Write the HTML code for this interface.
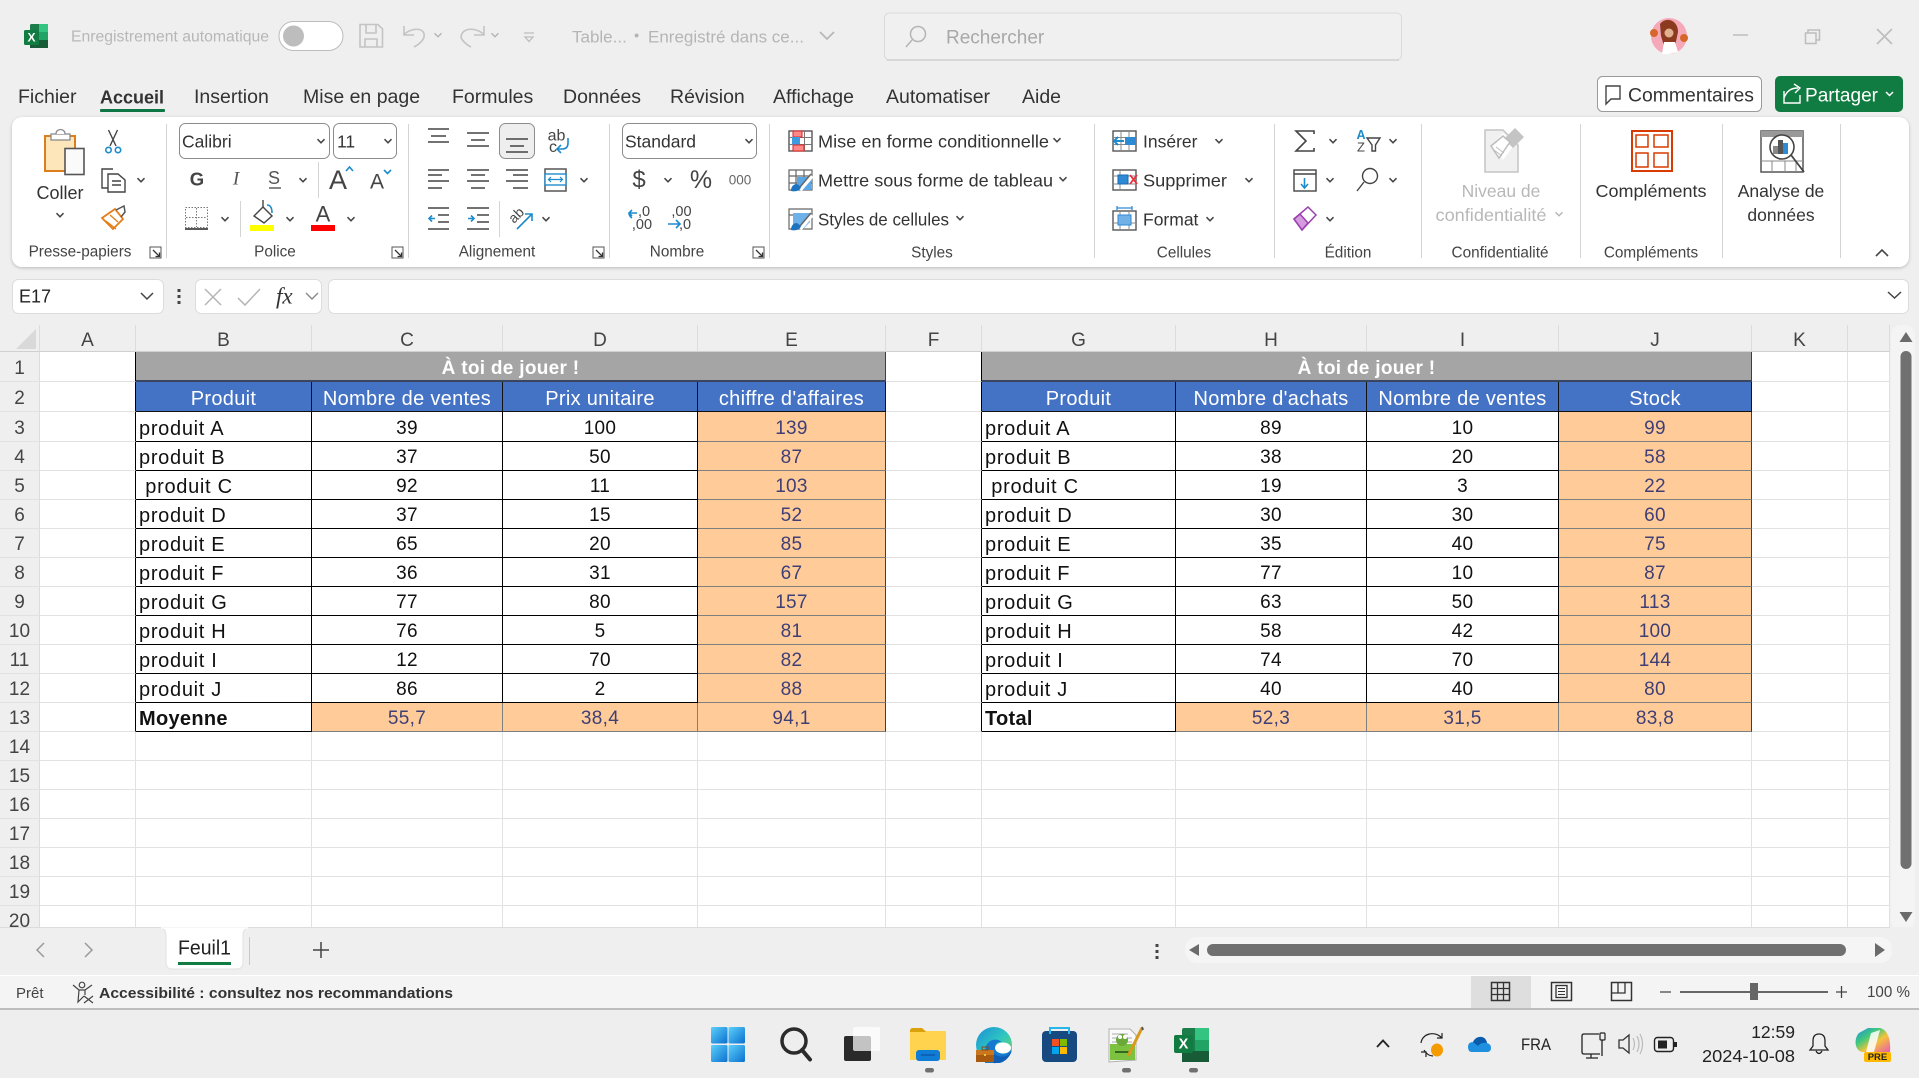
<!DOCTYPE html>
<html lang="fr"><head><meta charset="utf-8"><title>Excel</title>
<style>
html,body{margin:0;padding:0;width:1919px;height:1078px;overflow:hidden;background:#efefef;font-family:"Liberation Sans",sans-serif}
#g{position:absolute;left:0;top:325px;width:1890px;height:602px;overflow:hidden;background:#fff}
table{table-layout:fixed;border-collapse:separate;border-spacing:0;width:1890px;font-size:19px;letter-spacing:.3px;color:#111}
td,th{padding:3px 0 0;height:29px;box-sizing:border-box;text-align:center;vertical-align:middle;line-height:1;font-weight:400;white-space:pre;overflow:hidden;border-right:1px solid #e2e2e2;border-bottom:1px solid #e2e2e2}
th{background:#efefef;color:#444;border-right:1px solid #dcdcdc;border-bottom:1px solid #e2e2e2;letter-spacing:0}
tr.h th{height:27px;padding-top:4px;border-bottom:1px solid #d0d0d0}
tr.t td,tr.t th,tr.u td,tr.u th,tr.v td,tr.v th{height:30px;padding-top:4px}
.k{border-right:1px solid #000;border-bottom:1px solid #000}
.l{text-align:left;padding-left:3px;font-size:20px;letter-spacing:.7px}
.r{border-right:1px solid #000}
.o{background:#fc9;color:#3f3f76;border-right:1px solid #7f7f7f;border-bottom:1px solid #7f7f7f}
.oe{border-right:1px solid #3f3f3f}
.b{background:#4472c4;color:#fff;border-right:1px solid #111;border-bottom:1px solid #111;font-size:20px}
.y{background:#a5a5a5;color:#fff;font-weight:700;border-right:1px solid #3f3f3f;border-bottom:2px solid #3a4660}
.m{font-weight:700;letter-spacing:.3px}
svg{position:absolute;left:0;top:0}
text{font-family:"Liberation Sans",sans-serif;fill:#333;dominant-baseline:central}
.f{fill:none;stroke:#444;stroke-width:1.4}
.bl{fill:none;stroke:#1e8bcd;stroke-width:1.6}
.lb{font-size:15.3px;fill:#444;text-anchor:middle}
.tx{font-size:17.5px;fill:#333}
.mn{font-size:19.5px;fill:#333}
</style></head><body>
<div id="g"><table>
<colgroup><col style="width:40px"><col style="width:96px"><col style="width:176px"><col style="width:191px"><col style="width:195px"><col style="width:188px"><col style="width:96px"><col style="width:194px"><col style="width:191px"><col style="width:192px"><col style="width:193px"><col style="width:96px"><col style="width:42px"></colgroup>
<tr class="h"><th></th><th>A</th><th>B</th><th>C</th><th>D</th><th>E</th><th>F</th><th>G</th><th>H</th><th>I</th><th>J</th><th>K</th><th></th></tr>
<tr class="t"><th>1</th><td class="r"></td><td class="y" colspan="4">À toi de jouer !</td><td class="r"></td><td class="y" colspan="4">À toi de jouer !</td><td></td><td></td></tr>
<tr class="u"><th>2</th><td class="r"></td><td class="b">Produit</td><td class="b">Nombre de ventes</td><td class="b">Prix unitaire</td><td class="b">chiffre d'affaires</td><td class="r"></td><td class="b">Produit</td><td class="b">Nombre d'achats</td><td class="b">Nombre de ventes</td><td class="b">Stock</td><td></td><td></td></tr>
<tr class="v"><th>3</th><td class="r"></td><td class="k l">produit A</td><td class="k">39</td><td class="k">100</td><td class="o oe">139</td><td class="r"></td><td class="k l">produit A</td><td class="k">89</td><td class="k">10</td><td class="o oe">99</td><td></td><td></td></tr>
<tr><th>4</th><td class="r"></td><td class="k l">produit B</td><td class="k">37</td><td class="k">50</td><td class="o oe">87</td><td class="r"></td><td class="k l">produit B</td><td class="k">38</td><td class="k">20</td><td class="o oe">58</td><td></td><td></td></tr>
<tr><th>5</th><td class="r"></td><td class="k l"> produit C</td><td class="k">92</td><td class="k">11</td><td class="o oe">103</td><td class="r"></td><td class="k l"> produit C</td><td class="k">19</td><td class="k">3</td><td class="o oe">22</td><td></td><td></td></tr>
<tr><th>6</th><td class="r"></td><td class="k l">produit D</td><td class="k">37</td><td class="k">15</td><td class="o oe">52</td><td class="r"></td><td class="k l">produit D</td><td class="k">30</td><td class="k">30</td><td class="o oe">60</td><td></td><td></td></tr>
<tr><th>7</th><td class="r"></td><td class="k l">produit E</td><td class="k">65</td><td class="k">20</td><td class="o oe">85</td><td class="r"></td><td class="k l">produit E</td><td class="k">35</td><td class="k">40</td><td class="o oe">75</td><td></td><td></td></tr>
<tr><th>8</th><td class="r"></td><td class="k l">produit F</td><td class="k">36</td><td class="k">31</td><td class="o oe">67</td><td class="r"></td><td class="k l">produit F</td><td class="k">77</td><td class="k">10</td><td class="o oe">87</td><td></td><td></td></tr>
<tr><th>9</th><td class="r"></td><td class="k l">produit G</td><td class="k">77</td><td class="k">80</td><td class="o oe">157</td><td class="r"></td><td class="k l">produit G</td><td class="k">63</td><td class="k">50</td><td class="o oe">113</td><td></td><td></td></tr>
<tr><th>10</th><td class="r"></td><td class="k l">produit H</td><td class="k">76</td><td class="k">5</td><td class="o oe">81</td><td class="r"></td><td class="k l">produit H</td><td class="k">58</td><td class="k">42</td><td class="o oe">100</td><td></td><td></td></tr>
<tr><th>11</th><td class="r"></td><td class="k l">produit I</td><td class="k">12</td><td class="k">70</td><td class="o oe">82</td><td class="r"></td><td class="k l">produit I</td><td class="k">74</td><td class="k">70</td><td class="o oe">144</td><td></td><td></td></tr>
<tr><th>12</th><td class="r"></td><td class="k l">produit J</td><td class="k">86</td><td class="k">2</td><td class="o oe">88</td><td class="r"></td><td class="k l">produit J</td><td class="k">40</td><td class="k">40</td><td class="o oe">80</td><td></td><td></td></tr>
<tr><th>13</th><td class="r"></td><td class="k l m">Moyenne</td><td class="o">55,7</td><td class="o">38,4</td><td class="o oe">94,1</td><td class="r"></td><td class="k l m">Total</td><td class="o">52,3</td><td class="o">31,5</td><td class="o oe">83,8</td><td></td><td></td></tr>
<tr><th>14</th><td></td><td></td><td></td><td></td><td></td><td></td><td></td><td></td><td></td><td></td><td></td><td></td></tr>
<tr><th>15</th><td></td><td></td><td></td><td></td><td></td><td></td><td></td><td></td><td></td><td></td><td></td><td></td></tr>
<tr><th>16</th><td></td><td></td><td></td><td></td><td></td><td></td><td></td><td></td><td></td><td></td><td></td><td></td></tr>
<tr><th>17</th><td></td><td></td><td></td><td></td><td></td><td></td><td></td><td></td><td></td><td></td><td></td><td></td></tr>
<tr><th>18</th><td></td><td></td><td></td><td></td><td></td><td></td><td></td><td></td><td></td><td></td><td></td><td></td></tr>
<tr><th>19</th><td></td><td></td><td></td><td></td><td></td><td></td><td></td><td></td><td></td><td></td><td></td><td></td></tr>
<tr><th>20</th><td></td><td></td><td></td><td></td><td></td><td></td><td></td><td></td><td></td><td></td><td></td><td></td></tr>
</table></div>

<svg width="1919" height="1078" viewBox="0 0 1919 1078" xmlns="http://www.w3.org/2000/svg">
<defs>
<path id="ch" d="M-3.5-1.8 0 1.8 3.5-1.8" fill="none" stroke="#444" stroke-width="1.5"/>
<path id="chg" d="M-3.5-1.8 0 1.8 3.5-1.8" fill="none" stroke="#b5b5b5" stroke-width="1.4"/>
<g id="lc"><rect x="0" y="0" width="11" height="11" fill="none" stroke="#555" stroke-width="1"/><path d="M3 3 9.5 9.5M9.5 5.5V9.5H5.5" fill="none" stroke="#333" stroke-width="1.3"/></g>
<linearGradient id="win" x1="0" y1="0" x2="1" y2="1"><stop offset="0" stop-color="#5cd0fb"/><stop offset="1" stop-color="#0b70cf"/></linearGradient>
<linearGradient id="edge" x1="0" y1="0" x2="1" y2="1"><stop offset="0" stop-color="#1a8fd8"/><stop offset=".5" stop-color="#2fc6c0"/><stop offset="1" stop-color="#7fd84f"/></linearGradient>
<linearGradient id="cop" x1="0" y1="0" x2="1" y2="1"><stop offset="0" stop-color="#1a8fe0"/><stop offset=".35" stop-color="#42c97a"/><stop offset=".6" stop-color="#f5c33b"/><stop offset="1" stop-color="#e85ab0"/></linearGradient>
</defs>

<!-- Title bar -->
<rect x="30" y="24" width="18" height="24" rx="1.5" fill="#1b7d49"/><rect x="39" y="24" width="9" height="8" fill="#33c481"/><rect x="39" y="32" width="9" height="8" fill="#21a366"/><rect x="30" y="40" width="18" height="8" fill="#185c37"/>
<rect x="24" y="30" width="15" height="15" rx="1.5" fill="#107c41"/><text x="31.5" y="37.5" text-anchor="middle" style="font-size:12px;font-weight:700;fill:#fff">X</text>
<text x="71" y="37" style="font-size:15.3px;fill:#b7b7b7" textLength="198" lengthAdjust="spacingAndGlyphs">Enregistrement automatique</text>
<rect x="279" y="21.5" width="64" height="29" rx="14.5" fill="#fff" stroke="#bcbcbc"/><circle cx="293.5" cy="36" r="10.5" fill="#bdbdbd"/>
<path d="M360 24.500H378L382.500 29V47H360ZM366 25V33H376V25M365 47V39H377V47" fill="none" stroke="#c4c4c4" stroke-width="1.6"/>
<path d="M404 26V35H414M404 35C409 28 426 26 424 37 423 41 418 45 414 47" fill="none" stroke="#c4c4c4" stroke-width="1.6"/>
<use href="#chg" x="438" y="35"/>
<path d="M484 26V35H474M484 35C479 28 462 26 461 37 462 41 467 45 471 47" fill="none" stroke="#c4c4c4" stroke-width="1.6"/>
<use href="#chg" x="495" y="35"/>
<path d="M524 33H534M525 37H533L529 41.500Z" fill="none" stroke="#bdbdbd" stroke-width="1.3"/>
<text x="572" y="37" style="font-size:17px;fill:#b5b5b5">Table...</text><text x="634" y="36" style="font-size:15px;fill:#b5b5b5">•</text><text x="648" y="37" style="font-size:17px;fill:#b5b5b5">Enregistré dans ce...</text>
<path d="M820 32 827 39 834 32" fill="none" stroke="#b5b5b5" stroke-width="1.6"/>
<rect x="884.500" y="13" width="517" height="47" rx="5" fill="#f0f0f0" stroke="#dadada"/><path d="M887 60H1399" stroke="#cfcfcf" stroke-width="1.500"/>
<circle cx="918" cy="34" r="7.500" fill="none" stroke="#b5b5b5" stroke-width="1.500"/><path d="M912 40 906 47" stroke="#b5b5b5" stroke-width="1.500"/>
<text x="946" y="38" style="font-size:19px;fill:#a8a8a8">Rechercher</text>
<circle cx="1669" cy="36" r="18" fill="#f5a9b8"/><path d="M1660 24C1666 16 1678 20 1678 32L1675 46 1664 46 1661 36Z" fill="#8b3a1f"/><path d="M1662 54 1664 42H1675L1678 52 1669 54Z" fill="#fff"/><circle cx="1669" cy="33" r="4.500" fill="#e2b08f"/><circle cx="1654" cy="33" r="4" fill="#d6662a"/><circle cx="1684" cy="38" r="4" fill="#d6662a"/>
<path d="M1733 35H1748" stroke="#bdbdbd" stroke-width="1.500"/>
<path d="M1805.500 33H1816V43.500H1805.500ZM1808 33V30H1819.500V40H1816" fill="none" stroke="#bdbdbd" stroke-width="1.500"/>
<path d="M1877 29 1892 44M1892 29 1877 44" stroke="#bdbdbd" stroke-width="1.600"/>

<!-- Menu -->
<text x="18" y="97" class="mn">Fichier</text>
<text x="100" y="97" class="mn" style="font-weight:700;font-size:18.5px" textLength="64" lengthAdjust="spacingAndGlyphs">Accueil</text>
<text x="194" y="97" class="mn">Insertion</text>
<text x="303" y="97" class="mn">Mise en page</text>
<text x="452" y="97" class="mn">Formules</text>
<text x="563" y="97" class="mn">Données</text>
<text x="670" y="97" class="mn">Révision</text>
<text x="773" y="97" class="mn">Affichage</text>
<text x="886" y="97" class="mn">Automatiser</text>
<text x="1022" y="97" class="mn">Aide</text>
<rect x="100" y="109" width="65" height="3" rx="1" fill="#0e7544"/>
<rect x="1597.500" y="76.500" width="164" height="35" rx="5" fill="#fff" stroke="#9a9a9a"/>
<path d="M1606 86H1620V99H1611L1606 104Z" fill="none" stroke="#444" stroke-width="1.400"/>
<text x="1628" y="96" style="font-size:19px;fill:#333" textLength="126" lengthAdjust="spacingAndGlyphs">Commentaires</text>
<rect x="1775" y="76" width="128" height="36" rx="5" fill="#107c41"/>
<path d="M1784 91V103H1800V95M1784 98C1787 90 1792 88 1798 88M1794 84 1800 88 1795 93" fill="none" stroke="#fff" stroke-width="1.400"/>
<text x="1805" y="96" style="font-size:19px;fill:#fff" textLength="73" lengthAdjust="spacingAndGlyphs">Partager</text>
<path d="M1886 92 1889.500 95.500 1893 92" fill="none" stroke="#fff" stroke-width="1.500"/>

<!-- Ribbon -->
<rect x="12" y="117" width="1897" height="150" rx="10" fill="#fff" style="filter:drop-shadow(0 1.500px 1.500px rgba(0,0,0,.22))"/>
<path d="M166.500 124V258M408.500 124V258M609.500 124V258M769.500 124V258M1094.500 124V258M1274.500 124V258M1421.500 124V258M1580.500 124V258M1722.500 124V258M1840.500 124V258" stroke="#d4d4d4"/>

<!-- clipboard -->
<rect x="45" y="136" width="30" height="35" fill="#fde6ba" stroke="#dc7d1e" stroke-width="2"/>
<rect x="51" y="134" width="19" height="6" fill="#fff" stroke="#8a8a8a" stroke-width="1.300"/><path d="M56 134C56 128 65 128 65 134" fill="#fff" stroke="#8a8a8a" stroke-width="1.300"/>
<rect x="65" y="148.500" width="19" height="26" fill="#fafafa" stroke="#555" stroke-width="1.600"/>
<text x="60" y="193" style="font-size:18px;text-anchor:middle">Coller</text>
<use href="#ch" x="60" y="215"/>
<path d="M117.500 130 110 146M108.500 130 116 146" class="f"/><circle cx="108.500" cy="150" r="2.700" class="bl"/><circle cx="118" cy="150" r="2.700" class="bl"/>
<path d="M113 169H102V188H108M108 174H118L125 180V192H108ZM112 181H121M112 185H121" class="f"/><use href="#ch" x="141" y="180"/>
<path d="M102 218 115 209 123 219 113 229Z" fill="#fff" stroke="#e67c18" stroke-width="1.800"/><path d="M106 221 116 229M110 215 118 222" stroke="#e67c18" stroke-width="1.300"/><path d="M116 210 124 206 125 212 121 217" fill="none" stroke="#555" stroke-width="1.500"/>
<text x="80" y="252" class="lb">Presse-papiers</text><use href="#lc" x="150" y="247"/>

<!-- font -->
<rect x="179.500" y="123.500" width="150" height="35" rx="6" fill="#fff" stroke="#8c8c8c"/>
<text x="182" y="141.500" class="tx" style="font-size:17.500px">Calibri</text><use href="#ch" x="321" y="141"/>
<rect x="333.500" y="123.500" width="63" height="35" rx="6" fill="#fff" stroke="#8c8c8c"/>
<text x="337" y="141.500" class="tx" style="font-size:17.500px">11</text><use href="#ch" x="388" y="141"/>
<text x="197" y="179" style="font-size:18.500px;font-weight:700;text-anchor:middle;fill:#444">G</text>
<text x="236" y="179" style="font-size:19px;font-style:italic;text-anchor:middle;font-family:'Liberation Serif',serif;fill:#555">I</text>
<text x="274" y="178" style="font-size:18px;text-anchor:middle;fill:#555">S</text><path d="M269 188H281" stroke="#555" stroke-width="1.400"/>
<use href="#ch" x="303" y="180"/><path d="M318.500 162V198" stroke="#d4d4d4"/>
<text x="338" y="180" style="font-size:27px;text-anchor:middle;fill:#444">A</text><path d="M346 171 349.500 167 353 171" class="bl"/>
<text x="377" y="182" style="font-size:21px;text-anchor:middle;fill:#444">A</text><path d="M384 170 387.500 173.500 391 170" class="bl"/>
<rect x="185.500" y="207.500" width="22" height="20" fill="none" stroke="#777" stroke-width="1" stroke-dasharray="1.500 1.500"/><path d="M196.500 208V227M186 217.500H207" stroke="#777" stroke-width="1" stroke-dasharray="1.500 1.500"/><path d="M185 229H208" stroke="#222" stroke-width="1.600"/>
<use href="#ch" x="225" y="219"/><path d="M240.500 201V237" stroke="#d4d4d4"/>
<path d="M254 216 263 207 272 216 264 223Z" fill="none" stroke="#444" stroke-width="1.400"/><path d="M263 207V200" stroke="#444" stroke-width="1.400"/><path d="M267 205C271 205 272 209 272 213" class="bl"/>
<rect x="250" y="225" width="24" height="6" fill="#ff0"/><use href="#ch" x="290" y="219"/>
<text x="323" y="214" style="font-size:22px;text-anchor:middle;fill:#444">A</text><rect x="311" y="225" width="24" height="6" fill="#f00"/><use href="#ch" x="351" y="219"/>
<text x="275" y="252" class="lb">Police</text><use href="#lc" x="392" y="247"/>

<!-- alignment -->
<path d="M428 129H449M431 136H446M428 142H449" class="f"/>
<path d="M467 133H489M471 140H485M467 146H489" class="f"/>
<rect x="499.500" y="123.500" width="35" height="35" rx="6" fill="#eee" stroke="#8c8c8c"/><path d="M506 139H528M510 146H524M506 152H528" class="f"/>
<text x="556.500" y="136" style="font-size:16px;text-anchor:middle;fill:#444">ab</text><text x="553" y="147.500" style="font-size:16px;text-anchor:middle;fill:#444">c</text><path d="M568 138V143Q568 149 562 149H557M561 145 557 149 561 153" class="bl"/>
<path d="M428 170H449M428 175H442M428 181H449M428 188H442" class="f"/>
<path d="M467 170H489M471 175H485M467 181H489M471 188H485" class="f"/>
<path d="M506 170H528M513 175H528M506 181H528M513 188H528" class="f"/>
<rect x="545" y="169" width="21" height="22" fill="none" stroke="#555" stroke-width="1.500"/><rect x="545" y="174" width="21" height="11" fill="#fff" stroke="#1e8bcd" stroke-width="1.400"/><path d="M549 179.500H562M551 177 548.500 179.500 551 182M560 177 562.500 179.500 560 182" class="bl" style="stroke-width:1.200"/>
<use href="#ch" x="584" y="180"/>
<path d="M428 208H449M438 215H449M438 222H449M428 229H449" class="f"/><path d="M435 218.500H429M432 215.500 429 218.500 432 221.500" class="bl"/>
<path d="M467 208H489M477 215H489M477 222H489M467 229H489" class="f"/><path d="M468 218.500H474M471 215.500 474 218.500 471 221.500" class="bl"/>
<path d="M499.500 201V237" stroke="#d4d4d4"/>
<text x="516" y="215" transform="rotate(-45 516 215)" style="font-size:14px;text-anchor:middle;fill:#444">ab</text><path d="M517 229 532 214M525 214H532V221" class="bl"/>
<use href="#ch" x="546" y="219"/>
<text x="497" y="252" class="lb">Alignement</text><use href="#lc" x="593" y="247"/>

<!-- number -->
<rect x="622.500" y="123.500" width="134" height="35" rx="6" fill="#fff" stroke="#8c8c8c"/>
<text x="625" y="141.500" class="tx" style="font-size:17.500px">Standard</text><use href="#ch" x="749" y="141"/>
<text x="639" y="180" style="font-size:24px;text-anchor:middle;fill:#444">$</text><use href="#ch" x="668" y="180"/>
<text x="701" y="180" style="font-size:25px;text-anchor:middle;fill:#444">%</text>
<text x="740" y="180" style="font-size:13.500px;text-anchor:middle;fill:#666">000</text>
<text x="644" y="212" style="font-size:14.500px;text-anchor:middle;fill:#444">,0</text><text x="642" y="225" style="font-size:14.500px;text-anchor:middle;fill:#444">,00</text><path d="M637 213H629M632 210 629 213 632 216M629 213Q629 216 632 218" class="bl"/>
<text x="681.500" y="212" style="font-size:14.500px;text-anchor:middle;fill:#444">,00</text><text x="685" y="225" style="font-size:14.500px;text-anchor:middle;fill:#444">,0</text><path d="M668 224H680M676 220 680 224 676 228" class="bl"/>
<text x="677" y="252" class="lb">Nombre</text><use href="#lc" x="753" y="247"/>

<!-- styles -->
<rect x="789" y="131" width="23" height="20" fill="#fff" stroke="#555" stroke-width="1.400"/><path d="M789 137.500H812M789 144.500H812M797 131V151M804.500 131V151" stroke="#777"/><rect x="793" y="131" width="9" height="6" fill="#f88" stroke="#d22"/><rect x="792" y="137" width="8" height="8" fill="#3d9be0"/><rect x="793" y="145" width="11" height="6" fill="#f88" stroke="#d22"/>
<text x="818" y="141.500" class="tx" textLength="231" lengthAdjust="spacingAndGlyphs">Mise en forme conditionnelle</text><use href="#ch" x="1057" y="140"/>
<path d="M789 170H812V190H789ZM789 176H812M796 170V190M804 170V190M789 183H812" fill="none" stroke="#666" stroke-width="1.200"/><path d="M797 177H811V190H797ZM797 177" fill="#5aa7e8"/><path d="M800 190 812 176" stroke="#fff" stroke-width="4"/><path d="M800 187 811 174" stroke="#666" stroke-width="1.500"/><path d="M791 191C791 186 794 184 797 184L801 187C800 191 795 192 791 191Z" fill="#1e73c0"/>
<text x="818" y="180.500" class="tx" textLength="235" lengthAdjust="spacingAndGlyphs">Mettre sous forme de tableau</text><use href="#ch" x="1063" y="179"/>
<path d="M789 209H812V229H789ZM789 215H812" fill="none" stroke="#666" stroke-width="1.200"/><path d="M793 213H810V222L803 229H793Z" fill="#6fb2ea"/><path d="M800 229 812 215" stroke="#fff" stroke-width="4"/><path d="M800 226 811 213" stroke="#666" stroke-width="1.500"/><path d="M791 230C791 225 794 223 797 223L801 226C800 230 795 231 791 230Z" fill="#1e73c0"/>
<text x="818" y="219.500" class="tx" textLength="131" lengthAdjust="spacingAndGlyphs">Styles de cellules</text><use href="#ch" x="960" y="218"/>
<text x="932" y="253" class="lb">Styles</text>

<!-- cells -->
<rect x="1113" y="131" width="23" height="20" fill="#fff" stroke="#555" stroke-width="1.400"/><path d="M1113 137.500H1136M1113 144.500H1136M1121 131V151M1129 131V151" stroke="#888"/><rect x="1125" y="137" width="11" height="8" fill="#2f8ad6"/><path d="M1124 141H1114M1118 137 1114 141 1118 145" class="bl" style="stroke-width:2"/>
<text x="1143" y="141.500" class="tx">Insérer</text><use href="#ch" x="1219" y="141"/>
<rect x="1113" y="170" width="23" height="20" fill="#fff" stroke="#555" stroke-width="1.400"/><path d="M1113 176H1136M1113 184H1136M1120 170V190" stroke="#888"/><rect x="1118" y="175" width="10" height="9" fill="#2f8ad6" stroke="#1a6bb3"/><path d="M1130 175 1137 184M1137 175 1130 184" stroke="#e8303a" stroke-width="1.800"/>
<text x="1143" y="180.500" class="tx" textLength="84" lengthAdjust="spacingAndGlyphs">Supprimer</text><use href="#ch" x="1249" y="180"/>
<rect x="1113" y="211" width="23" height="19" fill="#fff" stroke="#555" stroke-width="1.400"/><path d="M1113 223H1136M1120 211V230M1129 211V230" stroke="#888"/><rect x="1118" y="215" width="13" height="10" fill="#72b1e6" stroke="#2f8ad6"/><path d="M1117 208H1132M1117 206V210M1132 206V210" stroke="#2f8ad6" stroke-width="1.300"/>
<text x="1143" y="219.500" class="tx">Format</text><use href="#ch" x="1210" y="219"/>
<text x="1184" y="253" class="lb">Cellules</text>

<!-- editing -->
<path d="M1314 134V131H1296L1306 141 1296 151H1314V148" class="f" style="stroke-width:1.600"/><use href="#ch" x="1333" y="141"/>
<text x="1361" y="135" style="font-size:12.500px;font-weight:700;text-anchor:middle;fill:#1e8bcd">A</text><text x="1361" y="147" style="font-size:13px;text-anchor:middle;fill:#444">Z</text><path d="M1367 138H1380L1375.500 145V151H1372V145Z" class="f"/><use href="#ch" x="1393" y="141"/>
<rect x="1294" y="170" width="22" height="21" fill="none" stroke="#444" stroke-width="1.400"/><path d="M1294 174H1316" stroke="#444" stroke-width="1.400"/><path d="M1304.500 178V187M1301 184 1304.500 188 1308 184" class="bl"/><use href="#ch" x="1330" y="180"/>
<circle cx="1370" cy="176" r="7.500" class="f"/><path d="M1364 182 1357 191" class="f"/><use href="#ch" x="1393" y="180"/>
<path d="M1294 219 1308 207 1316 215 1302 230Z" fill="#fff" stroke="#9a40ad" stroke-width="1.500"/><path d="M1294 219 1300 214 1308 223 1302 230Z" fill="#d49bde" stroke="#9a40ad" stroke-width="1.500"/><use href="#ch" x="1330" y="219"/>
<text x="1348" y="253" class="lb">Édition</text>

<!-- sensitivity -->
<path d="M1485 130H1503L1518 145V172H1485Z" fill="#f0f0f0" stroke="#c4c4c4" stroke-width="1.500"/>
<path d="M1491 146 1503 133 1515 144 1503 160Z" fill="#fff"/><path d="M1504 139 1515 128 1524 137 1513 148Z" fill="#c4c4c4"/><path d="M1491 146 1503 136 1510 142 1499 158Z" fill="#fff" stroke="#bdbdbd" stroke-width="1.500"/><path d="M1496 147 1504 153M1494 150 1502 156" stroke="#bdbdbd"/>
<text x="1501" y="191" class="tx" style="fill:#b8b8b8;text-anchor:middle">Niveau de</text>
<text x="1491" y="215" class="tx" style="fill:#b8b8b8;text-anchor:middle" textLength="111" lengthAdjust="spacingAndGlyphs">confidentialité</text><use href="#chg" x="1559" y="214"/>
<text x="1500" y="253" class="lb">Confidentialité</text>

<!-- addins -->
<rect x="1632" y="131" width="40" height="40" fill="#fff" stroke="#d83b01" stroke-width="2"/>
<path d="M1636 135H1648V147H1636ZM1654 135H1668V147H1654ZM1636 153H1648V167H1636ZM1654 153H1668V167H1654Z" fill="none" stroke="#d83b01" stroke-width="1.500"/>
<text x="1651" y="191" class="tx" style="text-anchor:middle" textLength="111" lengthAdjust="spacingAndGlyphs">Compléments</text>
<text x="1651" y="253" class="lb">Compléments</text>

<!-- analyse -->
<rect x="1761" y="131" width="42" height="41" fill="#fff" stroke="#555" stroke-width="1.500"/><rect x="1761" y="131" width="42" height="6" fill="#999"/><path d="M1761 161H1803M1772 161V172M1785 161V172M1796 161V172" stroke="#888"/>
<circle cx="1782" cy="147" r="12" fill="#fff" stroke="#444" stroke-width="1.600"/><path d="M1791 155 1804 172" stroke="#444" stroke-width="1.800"/>
<rect x="1773" y="146" width="5" height="8" fill="#888"/><rect x="1778" y="140" width="5" height="14" fill="#555"/><rect x="1783" y="143" width="5" height="11" fill="#2f8ad6"/>
<text x="1781" y="191" class="tx" style="text-anchor:middle">Analyse de</text>
<text x="1781" y="215" class="tx" style="text-anchor:middle">données</text>
<path d="M1876 256 1882 250 1888 256" fill="none" stroke="#444" stroke-width="1.600"/>

<!-- Formula bar -->
<rect x="12.500" y="279.500" width="151" height="34" rx="6" fill="#fff" stroke="#dcdcdc"/>
<text x="19" y="296.500" style="font-size:18px;fill:#222">E17</text>
<path d="M141 293 147 299 153 293" fill="none" stroke="#444" stroke-width="1.500"/>
<rect x="177.500" y="289" width="3" height="3" fill="#444"/><rect x="177.500" y="295" width="3" height="3" fill="#444"/><rect x="177.500" y="301" width="3" height="3" fill="#444"/>
<rect x="195.500" y="279.500" width="126" height="34" rx="6" fill="#fff" stroke="#dcdcdc"/>
<path d="M205 289 221 305M221 289 205 305" stroke="#b5b5b5" stroke-width="1.500"/>
<path d="M238 298 245 305 260 289" fill="none" stroke="#b5b5b5" stroke-width="1.500"/>
<text x="276" y="296" style="font-size:23px;font-style:italic;font-family:'Liberation Serif',serif;fill:#333">fx</text>
<path d="M306 293 312 299 318 293" fill="none" stroke="#888" stroke-width="1.400"/>
<rect x="328.500" y="279.500" width="1580" height="34" rx="6" fill="#fff" stroke="#dcdcdc"/>
<path d="M1888 292 1894.500 298 1901 292" fill="none" stroke="#444" stroke-width="1.500"/>

<!-- corner triangle -->
<path d="M36 329V349H16Z" fill="#d9d9d9"/>

<!-- vertical scroll -->
<rect x="1891" y="325" width="24" height="605" rx="10" fill="#f4f4f4"/>
<path d="M1906 332 1912.500 342H1899.500Z" fill="#6b6b6b"/>
<rect x="1900.500" y="351" width="11" height="518" rx="5.500" fill="#707070"/>
<path d="M1899.500 912H1912.500L1906 922Z" fill="#6b6b6b"/>

<!-- tab bar -->
<rect x="0" y="927" width="1919" height="48" fill="#efefef"/>
<path d="M0 927.500H1890" stroke="#dcdcdc"/>
<path d="M44 943 37 950 44 957" fill="none" stroke="#9a9a9a" stroke-width="1.500"/>
<path d="M85 943 92 950 85 957" fill="none" stroke="#9a9a9a" stroke-width="1.500"/>
<path d="M160 928Q166 928 166 936V962Q166 969 172 969H237Q243 969 243 962V936Q243 928 249 928Z" fill="#fff" stroke="#e2e2e2"/>
<path d="M161 928H248" stroke="#fff" stroke-width="1.500"/>
<text x="178" y="948" style="font-size:20.500px;fill:#222" textLength="53" lengthAdjust="spacingAndGlyphs">Feuil1</text>
<rect x="178" y="962" width="53" height="3" fill="#107c41"/>
<path d="M249.500 937V965" stroke="#c8c8c8"/>
<path d="M321 942V958M313 950H329" stroke="#444" stroke-width="1.500"/>
<rect x="1155.500" y="944" width="3" height="3" fill="#444"/><rect x="1155.500" y="950" width="3" height="3" fill="#444"/><rect x="1155.500" y="956" width="3" height="3" fill="#444"/>
<rect x="1185" y="937" width="707" height="26" rx="12" fill="#f5f5f5"/>
<path d="M1199 944V956L1189 950Z" fill="#6b6b6b"/>
<rect x="1207" y="944" width="639" height="12" rx="6" fill="#707070"/>
<path d="M1875 943V957L1885 950Z" fill="#6b6b6b"/>

<!-- status bar -->
<rect x="0" y="975" width="1919" height="33" fill="#f4f4f4"/><rect x="0" y="975" width="1919" height="1" fill="#fff"/>
<rect x="0" y="1008" width="1919" height="2" fill="#bdbdbd"/>
<text x="16" y="993.500" style="font-size:15px;fill:#444">Prêt</text>
<circle cx="82" cy="985" r="2.800" class="f" style="stroke-width:1.200"/><path d="M73 985 79 990H85L92 985M79 990 78 1002 82 998 84 996M85 990V995" class="f" style="stroke-width:1.200"/><path d="M84 996 93 1003M93 996 84 1003" class="f" style="stroke-width:1.200"/>
<text x="99" y="993.500" style="font-size:15px;font-weight:700;fill:#333" textLength="354" lengthAdjust="spacingAndGlyphs">Accessibilité : consultez nos recommandations</text>
<rect x="1471" y="976" width="60" height="32" fill="#dedede"/>
<rect x="1491.500" y="982.500" width="18" height="18" fill="none" stroke="#333" stroke-width="1.500"/><path d="M1497.500 983V1000M1503.500 983V1000M1492 988.500H1509M1492 994.500H1509" stroke="#333" stroke-width="1.300"/>
<rect x="1551.500" y="982.500" width="20" height="18" fill="none" stroke="#333" stroke-width="1.500"/><rect x="1556" y="985.500" width="11" height="12" fill="none" stroke="#333" stroke-width="1.300"/><path d="M1558 988.500H1565M1558 991.500H1565M1558 994.500H1565" stroke="#333"/>
<rect x="1611.500" y="982.500" width="20" height="18" fill="none" stroke="#333" stroke-width="1.500"/><path d="M1612 993H1625V983M1618 983V993" fill="none" stroke="#333" stroke-width="1.300"/>
<path d="M1660 992H1671M1836 992H1847M1841.500 986V998" stroke="#444" stroke-width="1.300"/>
<path d="M1680 992H1828" stroke="#666" stroke-width="2"/><rect x="1750" y="983" width="8" height="17" fill="#666"/>
<text x="1867" y="992.500" style="font-size:16px;fill:#444" textLength="43" lengthAdjust="spacingAndGlyphs">100 %</text>

<!-- taskbar -->
<rect x="0" y="1010" width="1919" height="68" fill="#eeeeee"/>
<rect x="711" y="1027" width="16.500" height="16.500" rx="1.500" fill="url(#win)"/><rect x="728.500" y="1027" width="16.500" height="16.500" rx="1.500" fill="url(#win)"/><rect x="711" y="1045" width="16.500" height="17" rx="1.500" fill="url(#win)"/><rect x="728.500" y="1045" width="16.500" height="17" rx="1.500" fill="url(#win)"/>
<circle cx="794" cy="1041" r="12" fill="none" stroke="#2b2b2b" stroke-width="3.500"/><path d="M802 1050 810 1059.500" stroke="#2b2b2b" stroke-width="4" stroke-linecap="round"/>
<rect x="844" y="1036" width="27" height="25" rx="2" fill="#2a2a2a"/><rect x="853" y="1027" width="27" height="24" rx="2" fill="#fff" fill-opacity=".72"/>
<path d="M910 1031Q910 1028 913 1028H922L926 1031H946V1060H910Z" fill="#ffd34e"/><path d="M910 1031Q910 1028 913 1028H922L926 1032H910Z" fill="#dba10b"/><rect x="916" y="1050" width="24" height="11" rx="3" fill="#0f7cd6"/><path d="M921 1055H935" stroke="#0a58a8" stroke-width="1.500"/>
<circle cx="994" cy="1045" r="18" fill="url(#edge)"/><path d="M1012 1047C1010 1055 1000 1055 997 1051 993 1046 997 1041 1002 1042 996 1037 986 1040 985 1050V1063H1000C1007 1061 1011 1055 1012 1047Z" fill="#1579cf"/><ellipse cx="1003" cy="1048" rx="8" ry="5.500" fill="#fff"/><path d="M1012 1050C1008 1058 1000 1058 994 1054L993 1063C1003 1064 1010 1058 1012 1050Z" fill="#0f5db5"/>
<rect x="976" y="1050" width="18" height="12" fill="#a85a10"/><rect x="976" y="1050" width="18" height="5" fill="#c9761f"/><rect x="982" y="1047" width="6" height="3" fill="none" stroke="#8a4a0d"/><rect x="984" y="1054" width="2" height="2" fill="#f0c040"/>
<rect x="1042" y="1031" width="35" height="31" rx="4" fill="#174a80"/><path d="M1050 1034V1028H1069V1034" fill="none" stroke="#27b6ea" stroke-width="2"/>
<rect x="1052" y="1039" width="7" height="7" fill="#f25022"/><rect x="1060" y="1039" width="7" height="7" fill="#7fba00"/><rect x="1052" y="1047" width="7" height="7" fill="#00a4ef"/><rect x="1060" y="1047" width="7" height="7" fill="#ffb900"/>
<path d="M1109 1029H1130L1136 1035V1060L1109 1062Z" fill="#fafafa" stroke="#b0b0b0"/><path d="M1112 1034H1128M1112 1038H1132M1112 1042H1132" stroke="#aaa"/><path d="M1110 1044H1135V1060H1110Z" fill="#7cc240"/><circle cx="1122" cy="1040" r="6" fill="#6aa83a"/><circle cx="1120" cy="1037" r="2" fill="#fff"/><circle cx="1125" cy="1037" r="2" fill="#fff"/><path d="M1115 1052H1130" stroke="#1d4a12" stroke-width="1.500"/>
<path d="M1128 1056 1142 1028" stroke="#d99a1c" stroke-width="3"/><path d="M1142 1027 1143 1030" stroke="#555" stroke-width="2"/>
<rect x="1182" y="1028" width="27" height="34" rx="2" fill="#1b7d49"/><rect x="1195" y="1028" width="14" height="12" fill="#33c481"/><rect x="1195" y="1040" width="14" height="11" fill="#21a366"/><rect x="1182" y="1051" width="27" height="11" fill="#185c37"/>
<rect x="1174" y="1035" width="19" height="18" rx="2" fill="#107c41"/><text x="1183.500" y="1044.500" text-anchor="middle" style="font-size:14.500px;font-weight:700;fill:#fff">X</text>
<rect x="925" y="1068" width="9" height="4.500" rx="2.200" fill="#707070"/><rect x="1122" y="1068" width="9" height="4.500" rx="2.200" fill="#707070"/><rect x="1189" y="1068" width="9" height="4.500" rx="2.200" fill="#707070"/>

<!-- tray -->
<path d="M1377 1047 1383 1040.500 1389 1047" fill="none" stroke="#222" stroke-width="1.800"/>
<path d="M1421 1043C1422 1034 1434 1030 1442 1038M1442 1033V1038H1437M1424 1050C1427 1055 1430 1056 1433 1056M1421 1052H1426V1057" fill="none" stroke="#222" stroke-width="1.200"/><ellipse cx="1437" cy="1050" rx="6" ry="6.500" fill="#f59b00"/>
<path d="M1472 1052Q1468 1052 1468 1047 1468 1042 1473 1042 1476 1036 1482 1037 1486 1038 1487 1043 1491 1044 1491 1048 1491 1052 1487 1052Z" fill="#1f8fe0"/><path d="M1473 1042Q1476 1036 1482 1037 1486 1038 1487 1043 1481 1042 1478 1046Z" fill="#0b5cad"/>
<text x="1536" y="1044.500" style="font-size:17px;text-anchor:middle;fill:#222" textLength="30" lengthAdjust="spacingAndGlyphs">FRA</text>
<path d="M1599 1034H1584Q1582 1034 1582 1036V1052Q1582 1054 1584 1054H1600M1591 1054V1058M1586 1058H1598M1602 1040V1056" fill="none" stroke="#222" stroke-width="1.300"/><rect x="1600" y="1033" width="5" height="7" rx="1" fill="none" stroke="#222" stroke-width="1.200"/>
<path d="M1619 1040H1623L1629 1035V1053L1623 1048H1619Z" fill="none" stroke="#333" stroke-width="1.300"/><path d="M1633 1038Q1636 1044 1633 1050M1637 1036Q1641 1044 1637 1052M1640 1034Q1645 1044 1640 1054" fill="none" stroke="#bbb" stroke-width="1.200"/>
<rect x="1654.500" y="1037.500" width="19" height="14" rx="3" fill="none" stroke="#222" stroke-width="1.400"/><rect x="1658" y="1040.500" width="9" height="8" fill="#222"/><rect x="1674" y="1042" width="3" height="5" fill="#222"/>
<text x="1795" y="1032" style="font-size:17.500px;text-anchor:end;fill:#222">12:59</text>
<text x="1795" y="1056" style="font-size:17.500px;text-anchor:end;fill:#222" textLength="93" lengthAdjust="spacingAndGlyphs">2024-10-08</text>
<path d="M1810 1050H1828L1825 1046V1041Q1825 1034 1819 1034 1813 1034 1813 1041V1046ZM1816 1051Q1819 1056 1822 1051" fill="none" stroke="#222" stroke-width="1.300"/>
<path d="M1868 1028H1880C1888 1030 1891 1040 1890 1052H1862C1854 1050 1854 1038 1859 1033Z" fill="url(#cop)"/><path d="M1871 1033 1880 1030 1874 1052 1866 1052Z" fill="#fff" fill-opacity=".85"/>
<rect x="1864" y="1052" width="27" height="10" rx="2" fill="#ffb900"/><text x="1877.500" y="1057.500" text-anchor="middle" style="font-size:9.500px;font-weight:700;fill:#222">PRE</text>
</svg>
</body></html>
